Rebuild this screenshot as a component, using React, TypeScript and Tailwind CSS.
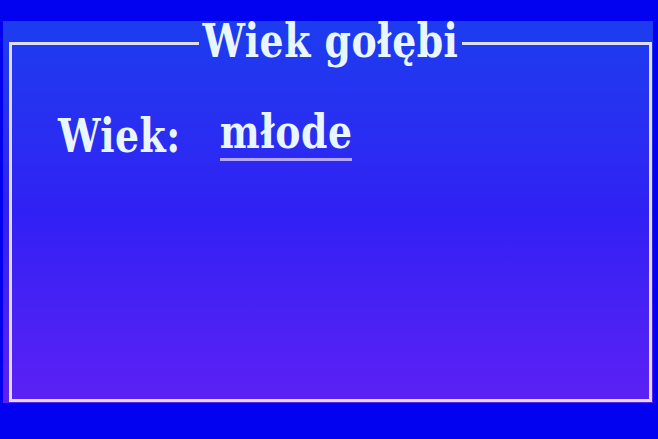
import React from 'react';

const font = { fontFamily: '"DejaVu Serif Condensed", "DejaVu Serif", "Liberation Serif", serif' };

const App: React.FC = () => {
  return (
    <div className="w-[658px] h-[439px] bg-[#0202f0] pl-[3px] pr-[5px] pt-[21px] overflow-hidden" style={font}>
      <div className="h-[382px] w-[650px] bg-gradient-to-b from-[#1c3cee] via-[#3020f4] to-[#5c20f4] flex flex-col">
        <fieldset className="flex-1 ml-[6px] mr-[1px] mb-[1px] border-[3px] border-[#dcdcff] rounded-none min-w-0 px-0">
          <legend className="mx-auto px-[4px] h-[44px] leading-[44px] text-[42px] font-bold tracking-[0.5px] text-[#e8f6ff]">
            <span className="inline-block scale-y-[1.12] origin-[center_33px]">Wiek gołębi</span>
          </legend>
          <div className="flex items-end pl-[46px] pt-[48px] text-[42px] font-bold tracking-[0.5px] text-[#e8f6ff] leading-[44px]">
            <span className="inline-block scale-y-[1.12] origin-bottom">Wiek:</span>
            <span className="ml-[39px] inline-flex flex-col">
              <span className="inline-block scale-y-[1.12] origin-bottom">młode</span>
              <span className="block h-[3px] bg-[#b4a4ff] mt-[1px] w-[132px]" />
            </span>
          </div>
        </fieldset>
      </div>
    </div>
  );
};

export default App;
